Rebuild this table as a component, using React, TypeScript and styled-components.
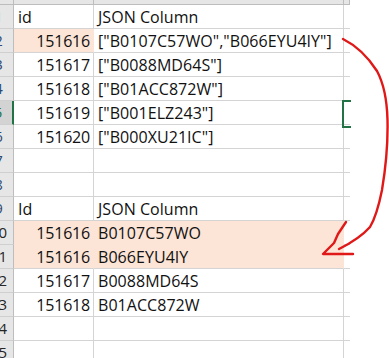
import React from "react";
import styled, { createGlobalStyle } from "styled-components";

const GlobalStyle = createGlobalStyle`
  html, body {
    margin: 0;
    padding: 0;
    background: #ffffff;
  }
`;

const GRID = "#d4d4d4";
const PEACH = "#fce4d6";
const EXCEL_GREEN = "#217346";

const Page = styled.div`
  position: relative;
  width: 389px;
  height: 358px;
  overflow: hidden;
  background: #ffffff;
  font-family: "Open Sans", Lato, sans-serif;
`;

const Sheet = styled.div`
  display: grid;
  grid-template-columns: 30px 80px 250px 6px;
  grid-auto-rows: 24px;
  margin-left: -16px;
  margin-top: -19px;
  width: max-content;
`;

const ColHeader = styled.div`
  box-sizing: border-box;
  background: #e6e6e6;
  border-right: 1px solid #bdbdbd;
  border-bottom: 1px solid #bdbdbd;
`;

const RowHeader = styled.div<{ $active?: boolean; $tone: string }>`
  box-sizing: border-box;
  background: ${(p) => (p.$active ? "#d3d3d3" : "#e6e6e6")};
  border-bottom: 1px solid #cfcfcf;
  border-right: ${(p) => (p.$active ? `2px solid ${EXCEL_GREEN}` : "1px solid #bdbdbd")};
  color: ${(p) => (p.$active ? EXCEL_GREEN : p.$tone)};
  font-size: 15px;
  line-height: 23px;
  text-align: center;
`;

const Cell = styled.div<{ $fill?: boolean; $joinBelow?: boolean; $num?: boolean }>`
  box-sizing: border-box;
  background: ${(p) => (p.$fill ? PEACH : "#ffffff")};
  border-right: 1px solid ${(p) => (p.$fill ? PEACH : GRID)};
  border-bottom: 1px solid ${(p) => (p.$joinBelow ? PEACH : GRID)};
  color: #111111;
  font-size: 16px;
  line-height: 24px;
  letter-spacing: ${(p) => (p.$num ? "-0.2px" : "0.05px")};
  padding: 0 3px 0 4px;
  text-align: ${(p) => (p.$num ? "right" : "left")};
  white-space: nowrap;
  overflow: visible;
`;

const SpareCell = styled.div<{ $selected?: boolean }>`
  position: relative;
  box-sizing: border-box;
  border-bottom: 1px solid ${GRID};

  ${(p) =>
    p.$selected &&
    `
    &::after {
      content: "";
      position: absolute;
      left: -2px;
      top: -1px;
      width: 7px;
      height: 24px;
      border: 2px solid ${EXCEL_GREEN};
      border-right: none;
    }
  `}
`;

const Overlay = styled.svg`
  position: absolute;
  left: 0;
  top: 0;
  pointer-events: none;
`;

type Row = {
  n: number;
  id?: string;
  json?: string;
  num?: boolean;
  fillId?: boolean;
  fillAll?: boolean;
  joinBelow?: boolean;
  active?: boolean;
};

const rows: Row[] = [
  { n: 1, id: "id", json: "JSON Column" },
  { n: 2, id: "151616", json: '["B0107C57WO","B066EYU4IY"]', num: true, fillId: true },
  { n: 3, id: "151617", json: '["B0088MD64S"]', num: true },
  { n: 4, id: "151618", json: '["B01ACC872W"]', num: true },
  { n: 5, id: "151619", json: '["B001ELZ243"]', num: true, active: true },
  { n: 6, id: "151620", json: '["B000XU21IC"]', num: true },
  { n: 7 },
  { n: 8 },
  { n: 9, id: "Id", json: "JSON Column" },
  { n: 10, id: "151616", json: "B0107C57WO", num: true, fillAll: true, joinBelow: true },
  { n: 11, id: "151616", json: "B066EYU4IY", num: true, fillAll: true },
  { n: 12, id: "151617", json: "B0088MD64S", num: true },
  { n: 13, id: "151618", json: "B01ACC872W", num: true },
  { n: 14 },
  { n: 15 },
];

function Arrow() {
  return (
    <Overlay width="389" height="358" viewBox="0 0 389 358">
      <g fill="none" stroke="#e01818" strokeWidth="2.4" strokeLinecap="round" strokeLinejoin="round">
        <path d="M343 39 C355 45 368 57 377 71 C384 84 387 100 387.5 120 C388 142 386 166 382 190 C379 205 376 217 370 227 C362 236 351 243 339 249" />
        <path d="M346 222 L338 234 L334 243 L328 249 L323 254 L353 254" />
      </g>
    </Overlay>
  );
}

export default function App() {
  return (
    <Page>
      <GlobalStyle />
      <Sheet>
        <ColHeader />
        <ColHeader />
        <ColHeader />
        <ColHeader />
        {rows.map((r) => (
          <React.Fragment key={r.n}>
            <RowHeader $active={r.active} $tone={r.n < 10 ? "#2f4a72" : "#262626"}>
              {r.n}
            </RowHeader>
            <Cell $num={r.num} $fill={r.fillId || r.fillAll} $joinBelow={r.joinBelow}>
              {r.id}
            </Cell>
            <Cell $fill={r.fillAll} $joinBelow={r.joinBelow}>
              {r.json}
            </Cell>
            <SpareCell $selected={r.active} />
          </React.Fragment>
        ))}
      </Sheet>
      <Arrow />
    </Page>
  );
}
